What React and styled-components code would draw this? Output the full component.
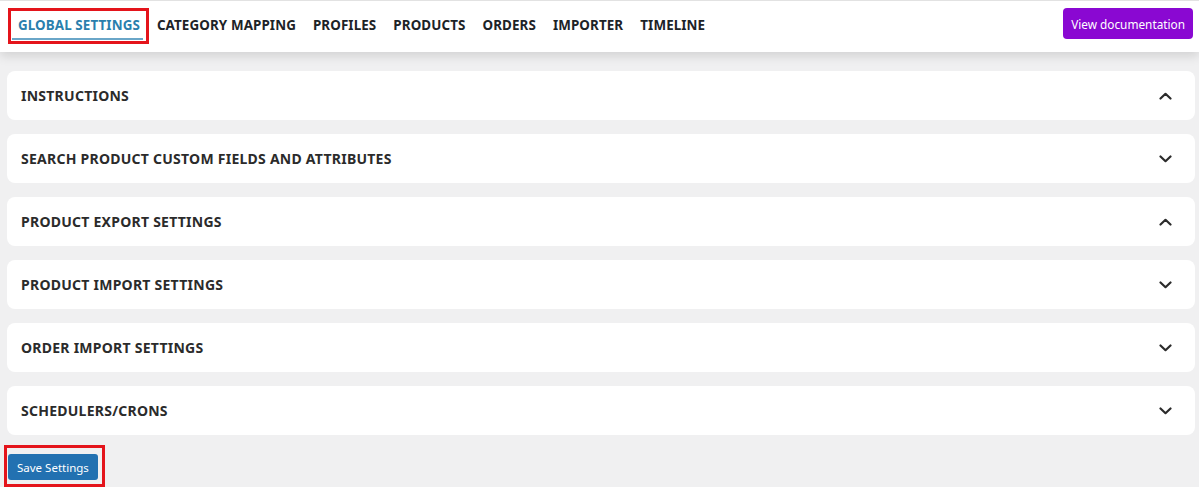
import React from "react";
import styled, { createGlobalStyle } from "styled-components";

const GlobalStyle = createGlobalStyle`
  html, body {
    margin: 0;
    padding: 0;
    background: #f0f0f1;
    font-family: "Noto Sans", "Open Sans", sans-serif;
  }
`;

const Page = styled.div`
  width: 1199px;
  height: 487px;
  overflow: hidden;
  background: #f0f0f1;
`;

const Header = styled.header`
  height: 52px;
  background: #fff;
  border-top: 1px solid #e2e2e2;
  box-sizing: border-box;
  display: flex;
  align-items: flex-start;
  justify-content: space-between;
  padding: 7px 6px 0 8px;
  box-shadow: 0 4px 10px rgba(0, 0, 0, 0.13);
  position: relative;
  z-index: 1;
`;

const Nav = styled.nav`
  display: flex;
  align-items: flex-start;
  height: 36px;
  gap: 17px;
`;

const Highlight = styled.span`
  display: flex;
  border: 3px solid #e4141b;
  padding: 0 3px 1px 1px;
  height: 36px;
  box-sizing: border-box;
  margin-right: -9px;
`;

const Tab = styled.a`
  font-size: 13.4px;
  font-weight: 700;
  letter-spacing: 0.1px;
  color: ${(p) => (p.$active ? "#2a7fad" : "#1d2327")};
  text-decoration: none;
  line-height: 16px;
  padding: ${(p) => (p.$active ? "6px 3px 4px 6px" : "9px 0 0")};
  border-bottom: ${(p) => (p.$active ? "2px solid #6aa6c8" : "none")};
  white-space: nowrap;
`;

const DocButton = styled.button`
  border: none;
  border-radius: 4px;
  background: #8a08d2;
  color: #fff;
  font-family: "Noto Sans", sans-serif;
  font-size: 11.8px;
  height: 31px;
  padding: 0 8px;
`;

const Content = styled.main`
  padding: 19px 4px 0 7px;
  display: flex;
  flex-direction: column;
  gap: 14px;
`;

const Card = styled.section`
  height: 49px;
  background: #fff;
  border-radius: 8px;
  display: flex;
  align-items: center;
  justify-content: space-between;
  padding: 0 23px 0 14px;
`;

const CardTitle = styled.h2`
  margin: 0;
  font-size: 14px;
  font-weight: 700;
  color: #2b2b2b;
  letter-spacing: 0.25px;
`;

const Footer = styled.div`
  padding: 10px 0 0 4px;
`;

const SaveBox = styled.span`
  display: inline-flex;
  border: 3px solid #e4141b;
  padding: 6px 4px 4px 1px;
`;

const SaveButton = styled.button`
  border: none;
  border-radius: 3px;
  background: #2271b1;
  color: #fff;
  font-family: "Noto Sans", sans-serif;
  font-size: 11.5px;
  height: 26px;
  padding: 0 9px;
`;

const Chevron = ({ up }) => (
  <svg width="13" height="8" viewBox="0 0 13 8" fill="none">
    <polyline
      points={up ? "1.5,6.5 6.5,1.8 11.5,6.5" : "1.5,1.5 6.5,6.2 11.5,1.5"}
      stroke="#2b2b2b"
      strokeWidth="2.2"
      strokeLinecap="round"
      strokeLinejoin="round"
    />
  </svg>
);

const tabs = ["CATEGORY MAPPING", "PROFILES", "PRODUCTS", "ORDERS", "IMPORTER", "TIMELINE"];

const sections = [
  { title: "INSTRUCTIONS", up: true },
  { title: "SEARCH PRODUCT CUSTOM FIELDS AND ATTRIBUTES" },
  { title: "PRODUCT EXPORT SETTINGS", up: true },
  { title: "PRODUCT IMPORT SETTINGS" },
  { title: "ORDER IMPORT SETTINGS" },
  { title: "SCHEDULERS/CRONS" },
];

export default function App() {
  return (
    <Page>
      <GlobalStyle />
      <Header>
        <Nav>
          <Highlight>
            <Tab $active href="#">GLOBAL SETTINGS</Tab>
          </Highlight>
          {tabs.map((t) => (
            <Tab key={t} href="#">{t}</Tab>
          ))}
        </Nav>
        <DocButton>View documentation</DocButton>
      </Header>
      <Content>
        {sections.map((s) => (
          <Card key={s.title}>
            <CardTitle>{s.title}</CardTitle>
            <Chevron up={s.up} />
          </Card>
        ))}
      </Content>
      <Footer>
        <SaveBox>
          <SaveButton>Save Settings</SaveButton>
        </SaveBox>
      </Footer>
    </Page>
  );
}
